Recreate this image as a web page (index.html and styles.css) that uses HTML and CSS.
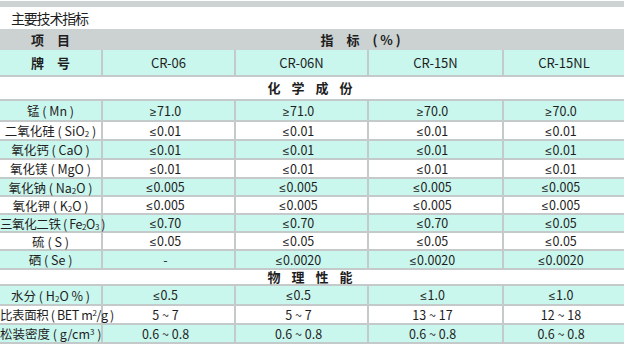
FILE: index.html
```html
<!DOCTYPE html>
<html lang="zh-CN">
<head>
  <meta charset="UTF-8">
  <title>主要技术指标</title>
  <link rel="stylesheet" href="styles.css">
</head>
<body>
  <div class="strip"></div>
  <h2 class="title">主要技术指标</h2>

  <table class="spec">
    <colgroup>
      <col class="c-name">
      <col class="c-val">
      <col class="c-val">
      <col class="c-val2">
      <col>
    </colgroup>
    <tr class="head">
      <td class="label">项　目</td>
      <td colspan="4" class="label">指　标　( % )</td>
    </tr>
    <tr class="brand">
      <td class="label">牌　号</td>
      <td>CR-06</td>
      <td>CR-06N</td>
      <td>CR-15N</td>
      <td>CR-15NL</td>
    </tr>
    <tr class="section">
      <td colspan="5">化 学 成 份</td>
    </tr>
    <tr class="cy r21">
      <td>锰 ( Mn )</td><td><i>≥</i>71.0</td><td><i>≥</i>71.0</td><td><i>≥</i>70.0</td><td><i>≥</i>70.0</td>
    </tr>
    <tr>
      <td>二氧化硅 ( SiO<sub>2</sub> )</td><td><i>≤</i>0.01</td><td><i>≤</i>0.01</td><td><i>≤</i>0.01</td><td><i>≤</i>0.01</td>
    </tr>
    <tr class="cy">
      <td>氧化钙 ( CaO )</td><td><i>≤</i>0.01</td><td><i>≤</i>0.01</td><td><i>≤</i>0.01</td><td><i>≤</i>0.01</td>
    </tr>
    <tr>
      <td>氧化镁 ( MgO )</td><td><i>≤</i>0.01</td><td><i>≤</i>0.01</td><td><i>≤</i>0.01</td><td><i>≤</i>0.01</td>
    </tr>
    <tr class="cy r17">
      <td>氧化钠 ( Na<sub>2</sub>O )</td><td><i>≤</i>0.005</td><td><i>≤</i>0.005</td><td><i>≤</i>0.005</td><td><i>≤</i>0.005</td>
    </tr>
    <tr class="r17">
      <td>氧化钾 ( K<sub>2</sub>O )</td><td><i>≤</i>0.005</td><td><i>≤</i>0.005</td><td><i>≤</i>0.005</td><td><i>≤</i>0.005</td>
    </tr>
    <tr class="cy r18">
      <td class="tight">三氧化二铁 ( Fe<sub>2</sub>O<sub>3</sub> )</td><td><i>≤</i>0.70</td><td><i>≤</i>0.70</td><td><i>≤</i>0.70</td><td><i>≤</i>0.05</td>
    </tr>
    <tr class="r18">
      <td>硫 ( S )</td><td><i>≤</i>0.05</td><td><i>≤</i>0.05</td><td><i>≤</i>0.05</td><td><i>≤</i>0.05</td>
    </tr>
    <tr class="cy">
      <td>硒 ( Se )</td><td>-</td><td><i>≤</i>0.0020</td><td><i>≤</i>0.0020</td><td><i>≤</i>0.0020</td>
    </tr>
    <tr class="section s2">
      <td colspan="5">物 理 性 能</td>
    </tr>
    <tr class="cy r20">
      <td>水分 ( H<sub>2</sub>O % )</td><td><i>≤</i>0.5</td><td><i>≤</i>0.5</td><td><i>≤</i>1.0</td><td><i>≤</i>1.0</td>
    </tr>
    <tr>
      <td class="tight">比表面积 ( BET m<sup>2</sup>/g )</td><td>5 ~ 7</td><td>5 ~ 7</td><td>13 ~ 17</td><td>12 ~ 18</td>
    </tr>
    <tr class="cy">
      <td>松装密度 ( g/cm<sup>3</sup> )</td><td>0.6 ~ 0.8</td><td>0.6 ~ 0.8</td><td>0.6 ~ 0.8</td><td>0.6 ~ 0.8</td>
    </tr>
  </table>
</body>
</html>
```

FILE: styles.css
```css
body {
  margin: 0;
  background: #fff;
  font-family: "Noto Sans CJK SC", "Noto Sans", sans-serif;
  color: #1e1e1e;
}
.strip {
  height: 6px;
  margin-top: 1px;
  background: #ccd3d2;
}
.title {
  margin: 0;
  height: 22px;
  padding-left: 11px;
  font-size: 14px;
  font-weight: normal;
  line-height: 22px;
  letter-spacing: -1.2px;
}
.spec {
  width: 624px;
  table-layout: fixed;
  border-collapse: separate;
  border-spacing: 0;
  font-size: 12.5px;
  border-bottom: 2px solid #c3cac9;
}
.c-name { width: 101px; }
.c-val { width: 133px; }
.c-val2 { width: 135px; }
.spec td {
  box-sizing: border-box;
  padding: 0 6px 0 0;
  text-align: center;
  line-height: 15px;
  white-space: nowrap;
  border-top: 2px solid #c3cac9;
  border-left: 2px solid #c3cac9;
}
.spec td:first-child {
  border-left: none;
  padding: 0;
}
/* narrow latin comparison signs instead of the full-width cjk ones */
.spec td i {
  font-style: normal;
  font-family: "Noto Sans", sans-serif;
  font-size: 11.5px;
  margin-right: 1px;
}
.spec tr { height: 19px; }
.spec tr.r21 { height: 21px; }
.spec tr.r20 { height: 20px; }
.spec tr.r18 { height: 18px; }
.spec tr.r17 { height: 17px; }
.spec .cy td { background: #c9f6ed; }
.spec .head { height: 21px; }
.spec .head td {
  background: #cbd2d1;
  border-top: none;
  border-left-color: #cbd2d1;
}
.spec .brand { height: 25px; }
.spec .brand td {
  background: #c9f6ed;
  border-top: none;
  font-size: 13px;
  padding: 0;
}
.spec .label {
  font-weight: bold;
  font-size: 13px;
}
.spec .section { height: 24px; }
.spec .section.s2 { height: 16px; }
.spec .section td {
  background: #fff;
  font-weight: bold;
  font-size: 13px;
  line-height: 14px;
  letter-spacing: 4px;
}
.tight { letter-spacing: -0.4px; }
sub, sup {
  font-size: 8px;
  line-height: 0;
}
sub { vertical-align: -1px; }
sup { vertical-align: 4px; }
```
